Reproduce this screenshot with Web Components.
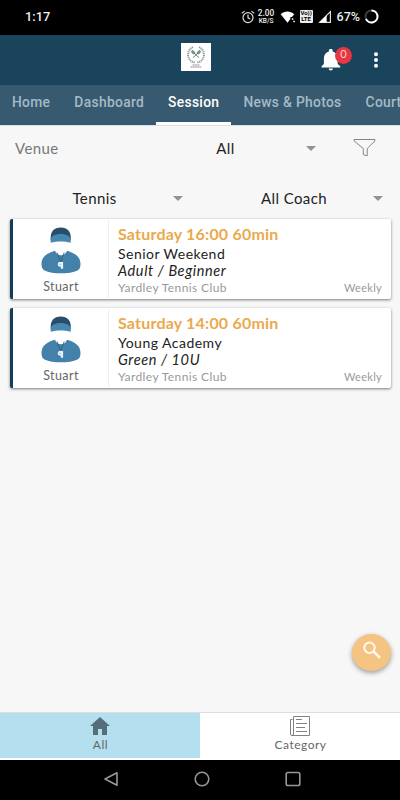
<!DOCTYPE html>
<html lang="en">
<head>
<meta charset="utf-8">
<meta name="viewport" content="width=device-width, initial-scale=1">
<title>Sessions</title>
<style>
    html, body {
        margin: 0;
        height: 100%;
        overflow: hidden;
        background: #f7f7f7;
    }
</style>
</head>
<body>
<session-app></session-app>

<script>
class BaseElement extends HTMLElement {
    constructor() {
        super();
        this.attachShadow({mode: 'open'});
    }
    connectedCallback() {
        const template = document.createElement('template');
        template.innerHTML = `<style>* { box-sizing: border-box; }${this.getStyles()}</style>${this.getTemplate()}`;
        this.shadowRoot.appendChild(template.content.cloneNode(true));
    }
}

class StatusBar extends BaseElement {
    getTemplate() {
        return `
            <span class="time">1:17</span>
            <div class="icons">
                <svg width="14" height="14" viewBox="0 0 14 14" fill="none" stroke="#ddd" stroke-width="1.2">
                    <circle cx="7" cy="7.6" r="5"/><path d="M7 4.6v3.2l2.2 1.3M.8 3.4 3.5 1.1M13.2 3.4l-2.7-2.3"/>
                </svg>
                <div class="speed"><span>2.00</span><span>KB/S</span></div>
                <svg width="16" height="14" viewBox="0 0 16 14" fill="#fff">
                    <path d="M.7 4.2C4.4.7 10.4.7 14.2 4.2L12 7.1h-1.6v1.8L7.5 12.7z"/>
                    <path d="M11.8 8.3h1.5v1.5h-1.5zM13.3 10.7h1.5v1.5h-1.5z"/>
                </svg>
                <div class="volte"><span>Vo))</span><span>LTE</span></div>
                <svg width="14" height="14" viewBox="0 0 14 14">
                    <path d="M12.4 1.6v10.8H1.6z" fill="none" stroke="#ddd" stroke-width="1.2"/><path d="M8.7 5.3v7.1H1.6z" fill="#fff"/>
                </svg>
                <span class="battery">67%</span>
                <svg width="15" height="15" viewBox="0 0 15 15" fill="none" stroke-width="2">
                    <circle cx="7.5" cy="7.5" r="6" stroke="#3c3c3c"/>
                    <path d="M7.5 1.5A6 6 0 1 1 2 9.8" stroke="#fff"/>
                </svg>
            </div>
        `;
    }
    getStyles() {
        return `
            :host {
                display: flex;
                justify-content: space-between;
                align-items: center;
                height: 35px;
                padding: 0 21px 2px 25px;
                background: #000;
                color: #eee;
                font: 500 12.5px Roboto, sans-serif;
            }
            .time { font-size: 12.8px; }
            .icons { display: flex; align-items: center; }
            .speed {
                display: flex;
                flex-direction: column;
                align-items: center;
                width: 17px;
                margin: 0 5px 0 3px;
                font-size: 8.3px;
                line-height: 9px;
            }
            .speed span + span { font-size: 6.5px; line-height: 7px; }
            .volte {
                display: flex;
                flex-direction: column;
                align-items: center;
                width: 13px;
                height: 13px;
                margin: 0 5px 0 4px;
                background: #eee;
                border-radius: 1px;
                color: #000;
                font-size: 6px;
                line-height: 6px;
                font-weight: 700;
            }
            .battery { margin: 0 4px 0 5px; }
        `;
    }
}
customElements.define('status-bar', StatusBar);

class AppHeader extends BaseElement {
    getTemplate() {
        return `
            <svg class="logo" width="30" height="28" viewBox="0 0 30 28">
                <path d="M0 0h30v28H0z" fill="#fff"/>
                <path d="M12 4.2A8 8 0 0 0 13.8 19.5M18 4.2A8 8 0 0 1 16.2 19.5" fill="none" stroke="#999da2" stroke-width="2" stroke-dasharray="1.3 .6"/>
                <path d="m11.8 14.8 5-4.6m1.4 4.6-5-4.6" stroke="#456b58" stroke-width=".8"/>
                <ellipse cx="12.2" cy="9.3" rx="1.2" ry="2" transform="rotate(-45 12.2 9.3)" fill="#7fa18d" stroke="#456b58" stroke-width=".6"/>
                <ellipse cx="17.8" cy="9.3" rx="1.2" ry="2" transform="rotate(45 17.8 9.3)" fill="#7fa18d" stroke="#456b58" stroke-width=".6"/>
                <path d="M11.5 22h7M9.5 24h11" stroke="#92878c" stroke-width="1" stroke-dasharray="1.5 .3"/>
            </svg>
            <div class="actions">
                <div class="bell">
                    <svg width="20" height="22" viewBox="0 0 20 22" fill="#fff">
                        <path d="M.6 18.4v-1.2l2.3-2.3V9.3c0-3.4 1.8-6 5-6.8v-.7a1.9 1.9 0 0 1 3.8 0v.7c3.1.8 5 3.4 5 6.8v5.6l2.6 2.3v1.2zM7.7 19.4h4.2a2.1 2.1 0 0 1-4.2 0z"/>
                    </svg>
                    <span class="badge">0</span>
                </div>
                <svg width="6" height="16" viewBox="0 0 6 16" fill="#fff">
                    <circle cx="3" cy="2.2" r="2"/><circle cx="3" cy="8" r="2"/><circle cx="3" cy="13.8" r="2"/>
                </svg>
            </div>
        `;
    }
    getStyles() {
        return `
            :host {
                display: grid;
                grid-template-columns: 1fr 30px 1fr;
                height: 50px;
                padding: 8px 21px 0 12px;
                background: #19445b;
            }
            .logo { display: block; grid-column: 2; }
            .actions {
                display: flex;
                justify-content: flex-end;
                align-items: flex-start;
                gap: 32px;
                padding-top: 6px;
            }
            .actions > svg { margin-top: 3px; }
            .bell { position: relative; height: 22px; }
            .badge {
                position: absolute;
                left: 14px;
                top: -2px;
                width: 17px;
                height: 17px;
                border-radius: 50%;
                background: #e73740;
                color: #fbd5d8;
                font: 11px/14px Lato, sans-serif;
                text-align: center;
            }
        `;
    }
}
customElements.define('app-header', AppHeader);

class TabItem extends BaseElement {
    getTemplate() {
        return `<slot></slot>`;
    }
    getStyles() {
        return `
            :host {
                display: block;
                flex: none;
                height: 40px;
                padding: 0 12px;
                border-bottom: 3px solid transparent;
                color: #a5bac6;
                font: 500 13.8px/35px Roboto, sans-serif;
                letter-spacing: .33px;
                white-space: nowrap;
            }
            :host([active]) {
                border-color: #fff;
                color: #fff;
            }
        `;
    }
}
customElements.define('tab-item', TabItem);

class TabStrip extends BaseElement {
    getTemplate() {
        return `<slot></slot>`;
    }
    getStyles() {
        return `
            :host {
                display: flex;
                height: 40px;
                overflow: hidden;
                background: #375a70;
            }
        `;
    }
}
customElements.define('tab-strip', TabStrip);

class SelectField extends BaseElement {
    getTemplate() {
        return `
            <span class="value"><slot></slot></span>
            <svg width="10" height="5" viewBox="0 0 10 5"><path d="M0 0h10L5 5z" fill="#929292"/></svg>
        `;
    }
    getStyles() {
        return `
            :host {
                display: flex;
                align-items: center;
                color: #222;
                letter-spacing: .4px;
            }
            .value { flex: 1; padding-left: 10px; text-align: center; }
            svg { flex: none; }
        `;
    }
}
customElements.define('select-field', SelectField);

class FilterPanel extends BaseElement {
    getTemplate() {
        return `
            <div class="row venue">
                <span class="label">Venue</span>
                <select-field>All</select-field>
                <svg width="23" height="19" viewBox="0 0 23 19" fill="none" stroke="#858585" stroke-width="1">
                    <path d="M1 1.5h21v1.4l-7.8 7.6v7.3l-3.9-1.2v-6.1L1 2.9z"/>
                </svg>
            </div>
            <div class="row pair">
                <select-field>Tennis</select-field>
                <select-field>All Coach</select-field>
            </div>
        `;
    }
    getStyles() {
        return `
            :host {
                display: block;
                height: 94px;
                border-top: 1px solid #d8dfe3;
                font-size: 15px;
            }
            .row { display: grid; align-items: center; }
            .venue {
                grid-template-columns: 120px 181px 23px;
                height: 44px;
                padding-left: 15px;
            }
            .venue svg { margin: -1px 0 0 37px; }
            .label { color: #777; letter-spacing: .4px; }
            .pair {
                grid-template-columns: 177px 178px;
                column-gap: 22px;
                height: 46px;
                margin-top: 5px;
                padding-left: 6px;
            }
        `;
    }
}
customElements.define('filter-panel', FilterPanel);

class SessionCard extends BaseElement {
    getTemplate() {
        return `
            <div class="coach">
                <svg width="40" height="47" viewBox="0 0 40 47">
                    <path d="M.5 37C.5 29 7 26 14 23.8c2 6 10 6 12 0C33 26 39.5 29 39.5 37c0 3.5-1 5.5-3 6.4-8 3.9-25 3.9-33 0-2-.9-3-2.9-3-6.4z" fill="#4481aa"/>
                    <path d="M9.7 13C9 4.2 13 .5 19.7.5s10.8 3.7 10 12.5z" fill="#294e6c"/>
                    <path d="M9.7 15.8v-4c2-6.4 18-6.4 20 0v4c-6.2-1.9-13.8-1.9-20 0z" fill="#4787b1"/>
                    <path d="m16 25.5 3.6 9.5 3.6-9.5" fill="none" stroke="#2b5875" stroke-width=".8"/>
                    <circle cx="19.3" cy="37.3" r="2.5" fill="#e4f3fa"/>
                    <path d="M19.3 35h2.8v6.800h-2.300v-3z" fill="#e4f3fa"/>
                    <circle cx="19" cy="37.3" r=".5" fill="#4481aa"/>
                </svg>
                <span>${this.getAttribute('coach')}</span>
            </div>
            <div class="info">
                <h4>${this.getAttribute('when')}</h4>
                <p class="name">${this.getAttribute('name')}</p>
                <p class="level">${this.getAttribute('level')}</p>
                <div class="foot">
                    <span class="club">${this.getAttribute('club')}</span>
                    <span class="repeat">${this.getAttribute('repeat')}</span>
                </div>
            </div>
        `;
    }
    getStyles() {
        return `
            :host {
                display: flex;
                height: 80px;
                background: #fff;
                border-left: 3px solid #123f58;
                border-radius: 2px;
                box-shadow: 0 1px 3px rgba(0, 0, 0, .5);
            }
            .coach {
                display: flex;
                flex-direction: column;
                align-items: center;
                width: 96px;
                padding: 7px 0 0 1px;
                margin: 1px 0;
                border-right: 1px solid #eee;
                color: #666;
                font-size: 12.5px;
                line-height: 15px;
                letter-spacing: .4px;
            }
            .coach svg { flex: none; }
            .coach span { margin-top: 5px; }
            .info {
                flex: 1;
                padding: 5px 9px 0 9px;
                white-space: nowrap;
            }
            h4 {
                margin: 0;
                color: #eaa94e;
                font-size: 16px;
                line-height: 19px;
                font-weight: 700;
                letter-spacing: .2px;
            }
            p {
                margin: 0;
                color: #222;
                font-size: 14px;
                line-height: 18px;
                letter-spacing: .48px;
            }
            .name { padding-top: 2px; }
            .level {
                font-size: 14.5px;
                font-style: italic;
                line-height: 16px;
                letter-spacing: .6px;
            }
            .foot {
                display: flex;
                justify-content: space-between;
                padding-top: 1px;
                color: #999;
                font-size: 12px;
                line-height: 15px;
                letter-spacing: .4px;
            }
            .repeat { font-size: 11px; letter-spacing: .3px; }
        `;
    }
}
customElements.define('session-card', SessionCard);

class SearchFab extends BaseElement {
    getTemplate() {
        return `
            <svg width="20" height="20" viewBox="0 0 20 20" fill="none" stroke="#fffaf0" stroke-width="2">
                <circle cx="7.5" cy="6.8" r="5.2"/><path d="m11.4 10.4 6.6 6.4" stroke-width="2.4"/>
            </svg>
        `;
    }
    getStyles() {
        return `
            :host {
                display: flex;
                justify-content: center;
                align-items: center;
                width: 39px;
                height: 37px;
                padding-bottom: 4px;
                border-radius: 50%;
                background: #f5c482;
                box-shadow: 0 2px 5px rgba(0, 0, 0, .38);
            }
        `;
    }
}
customElements.define('search-fab', SearchFab);

class BottomTab extends BaseElement {
    getTemplate() {
        return `<slot name="icon"></slot><span><slot></slot></span>`;
    }
    getStyles() {
        return `
            :host {
                display: flex;
                flex: 1;
                flex-direction: column;
                align-items: center;
                height: 45px;
                padding-top: 2px;
                background: #fff;
                color: #666;
                font-size: 12px;
                line-height: 15px;
                letter-spacing: .5px;
            }
            :host([active]) { background: #b4dfee; }
            span { margin-top: 1px; padding-left: 1px; }
        `;
    }
}
customElements.define('bottom-tab', BottomTab);

class SystemNav extends BaseElement {
    getTemplate() {
        return `
            <svg width="16" height="16" viewBox="0 0 16 16"><path d="M14 1.8v12.4L2 8z"/></svg>
            <svg width="16" height="16" viewBox="0 0 16 16"><circle cx="8" cy="8" r="6.8"/></svg>
            <svg width="16" height="16" viewBox="0 0 16 16"><rect x="1.2" y="1.5" width="13.6" height="13" rx="1.8"/></svg>
        `;
    }
    getStyles() {
        return `
            :host {
                display: flex;
                justify-content: center;
                gap: 75px;
                height: 40px;
                padding: 11px 0 0 4px;
                background: #000;
            }
            svg {
                flex: none;
                fill: none;
                stroke: #979797;
                stroke-width: 1.6;
                stroke-linejoin: round;
            }
        `;
    }
}
customElements.define('system-nav', SystemNav);

class SessionApp extends BaseElement {
    getTemplate() {
        return `
            <status-bar></status-bar>
            <app-header></app-header>
            <tab-strip>
                <tab-item>Home</tab-item>
                <tab-item>Dashboard</tab-item>
                <tab-item active>Session</tab-item>
                <tab-item>News &amp; Photos</tab-item>
                <tab-item>Court</tab-item>
            </tab-strip>
            <filter-panel></filter-panel>
            <main>
                <session-card coach="Stuart" when="Saturday 16:00 60min" name="Senior Weekend"
                    level="Adult / Beginner" club="Yardley Tennis Club" repeat="Weekly"></session-card>
                <session-card coach="Stuart" when="Saturday 14:00 60min" name="Young Academy"
                    level="Green / 10U" club="Yardley Tennis Club" repeat="Weekly"></session-card>
            </main>
            <search-fab></search-fab>
            <nav>
                <bottom-tab active>
                    <svg slot="icon" width="22" height="21" viewBox="0 0 22 21" fill="#546e7a">
                        <path d="M11 2 21 11h-3v9h-5v-6H9v6H4v-9H1z"/>
                    </svg>
                    All
                </bottom-tab>
                <bottom-tab>
                    <svg slot="icon" width="22" height="21" viewBox="0 0 22 21" fill="none" stroke="#828282">
                        <path d="M4.5 1.5h16v19H3A1.5 1.5 0 0 1 1.5 19V4.5h2M4.5 1.5V19A1.5 1.5 0 0 1 3 20.5M7 4.5h6M7 8.5h11M7 12.5h9M7 16.5h11"/>
                    </svg>
                    Category
                </bottom-tab>
            </nav>
            <system-nav></system-nav>
        `;
    }
    getStyles() {
        return `
            :host {
                position: relative;
                display: flex;
                flex-direction: column;
                height: 800px;
                background: #f7f7f7;
                font-family: Lato, "Open Sans", sans-serif;
            }
            main {
                display: flex;
                flex: 1;
                flex-direction: column;
                gap: 9px;
                padding: 0 9px 0 10px;
            }
            /* floats over the list */
            search-fab {
                position: absolute;
                right: 9px;
                bottom: 129px;
            }
            nav {
                display: flex;
                height: 48px;
                border-top: 1px solid #dedede;
                background: #fff;
            }
        `;
    }
}
customElements.define('session-app', SessionApp);
</script>
</body>
</html>
